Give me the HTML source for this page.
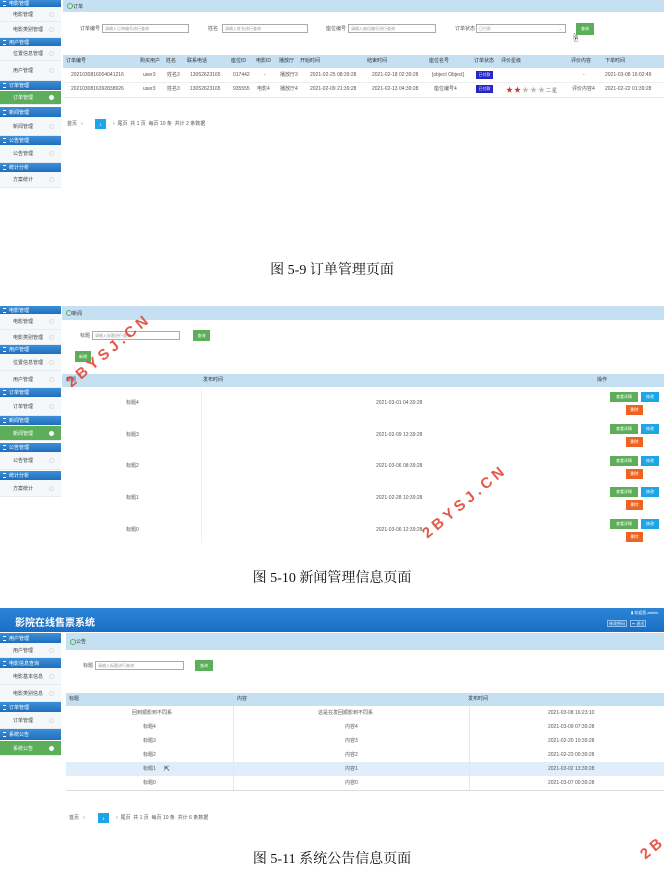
<!DOCTYPE html>
<html><head><meta charset="utf-8"><style>
*{margin:0;padding:0;box-sizing:border-box}
body{width:664px;height:876px;background:#fff;position:relative;overflow:hidden;font-family:"Liberation Sans","Noto Sans CJK SC",sans-serif;color:#555}
.a{position:absolute;white-space:nowrap}
.t{font-size:5px;line-height:1}
.sh{position:absolute;left:0;width:61px;background:linear-gradient(#3d8fd6,#1f6fbf);color:#fff;font-size:5px;padding-left:9px;display:flex;align-items:center}
.sh:before{content:"";position:absolute;left:3px;width:3px;height:3px;border-top:1px solid #fff;border-bottom:1px solid #fff}
.si{position:absolute;left:0;width:61px;background:#f4f8fb;font-size:5px;color:#444;padding-left:13px;display:flex;align-items:center;border-bottom:1px solid #e4ecf2}
.si:after{content:"";position:absolute;right:7px;width:3px;height:3px;border:1px solid #ddd;border-radius:50%}
.act{background:#5cae5a;color:#fff}
.act:after{border-color:#fff;background:#fff}
.hb{position:absolute;background:#c6e0f3;font-size:5px;color:#333;display:flex;align-items:center;padding-left:10px}
.hb:before{content:"";position:absolute;left:4px;width:4px;height:4px;border:1px solid #5cae5a;border-radius:50%}
.inp{position:absolute;height:9px;border:1px solid #aaa;background:#fff;font-size:4px;color:#999;padding-left:2px;line-height:7px}
.btn{position:absolute;color:#fff;font-size:4px;display:flex;align-items:center;justify-content:center}
.g{background:#5cae5a}.b{background:#1ea5e8}.o{background:#f0621f}
.th{position:absolute;background:#c6e0f3;font-size:5px;color:#333}
.cap{position:absolute;width:664px;text-align:center;font-family:"Liberation Serif","Noto Serif CJK SC",serif;font-size:14px;color:#111}
.wm{position:absolute;color:#e23a2a;font-weight:bold;font-size:15px;letter-spacing:4px;transform:rotate(-40deg);transform-origin:left bottom;opacity:.85}
</style></head><body>

<!-- ========== Screenshot 1 ========== -->
<div class="sh" style="top:0;height:7px">电影管理</div>
<div class="si" style="top:7px;height:15px">电影管理</div>
<div class="si" style="top:22px;height:16px">电影类别管理</div>
<div class="sh" style="top:38px;height:8px">用户管理</div>
<div class="si" style="top:46px;height:15px">位置信息管理</div>
<div class="si" style="top:61px;height:20px">用户管理</div>
<div class="sh" style="top:81px;height:9px">订单管理</div>
<div class="si act" style="top:91px;height:14px">订单管理</div>
<div class="sh" style="top:107px;height:10px">新闻管理</div>
<div class="si" style="top:117px;height:19px">新闻管理</div>
<div class="sh" style="top:136px;height:9px">公告管理</div>
<div class="si" style="top:145px;height:18px">公告管理</div>
<div class="sh" style="top:163px;height:9px">统计分析</div>
<div class="si" style="top:172px;height:16px">方案统计</div>

<div class="hb" style="left:63px;top:0;width:601px;height:12px">订单</div>
<div class="a t" style="left:80px;top:27px">订单编号</div><div class="inp" style="left:102px;top:24px;width:87px">请输入订单编号进行查询</div>
<div class="a t" style="left:208px;top:27px">姓名</div><div class="inp" style="left:222px;top:24px;width:86px">请输入姓名进行查询</div>
<div class="a t" style="left:326px;top:27px">座位编号</div><div class="inp" style="left:348px;top:24px;width:88px">请输入座位编号进行查询</div>
<div class="a t" style="left:455px;top:27px">订单状态</div><div class="inp" style="left:476px;top:24px;width:90px">已付款<span style="position:absolute;right:3px">⌄</span></div>
<div class="btn g" style="left:576px;top:23px;width:18px;height:12px">查询</div>
<div class="a" style="left:571px;top:31px;font-size:9px;color:#333">☝</div>

<div class="th" style="left:63px;top:55px;width:601px;height:13px"></div>
<div class="a t" style="top:59px;left:66px;color:#333">订单编号</div>
<div class="a t" style="top:59px;left:140px;color:#333">购买用户</div>
<div class="a t" style="top:59px;left:166px;color:#333">姓名</div>
<div class="a t" style="top:59px;left:187px;color:#333">联系电话</div>
<div class="a t" style="top:59px;left:231px;color:#333">座位ID</div>
<div class="a t" style="top:59px;left:256px;color:#333">电影ID</div>
<div class="a t" style="top:59px;left:279px;color:#333">播放厅</div>
<div class="a t" style="top:59px;left:300px;color:#333">开始时间</div>
<div class="a t" style="top:59px;left:367px;color:#333">结束时间</div>
<div class="a t" style="top:59px;left:429px;color:#333">座位名号</div>
<div class="a t" style="top:59px;left:474px;color:#333">订单状态</div>
<div class="a t" style="top:59px;left:501px;color:#333">评价星级</div>
<div class="a t" style="top:59px;left:571px;color:#333">评价内容</div>
<div class="a t" style="top:59px;left:605px;color:#333">下单时间</div>
<div class="a" style="left:63px;top:82px;width:601px;border-top:1px solid #eee"></div>
<div class="a" style="left:63px;top:97px;width:601px;border-top:1px solid #e6e6e6"></div>
<div class="a t" style="top:73px;left:71px">2021030816004041216</div>
<div class="a t" style="top:73px;left:143px">user3</div>
<div class="a t" style="top:73px;left:167px">姓名3</div>
<div class="a t" style="top:73px;left:190px">13052623165</div>
<div class="a t" style="top:73px;left:233px">017442</div>
<div class="a t" style="top:73px;left:264px">-</div>
<div class="a t" style="top:73px;left:280px">播放厅3</div>
<div class="a t" style="top:73px;left:310px">2021-02-25 08:39:28</div>
<div class="a t" style="top:73px;left:372px">2021-02-18 02:39:28</div>
<div class="a t" style="top:73px;left:432px">[object Object]</div>
<div class="btn" style="left:476px;top:71px;width:17px;height:8px;background:#2424c8">已付款</div>
<div class="a t" style="top:73px;left:583px">-</div>
<div class="a t" style="top:73px;left:605px">2021-03-08 16:02:49</div>
<div class="a t" style="top:87px;left:71px">2021030816392838926</div>
<div class="a t" style="top:87px;left:143px">user3</div>
<div class="a t" style="top:87px;left:167px">姓名3</div>
<div class="a t" style="top:87px;left:190px">13052623165</div>
<div class="a t" style="top:87px;left:233px">935555</div>
<div class="a t" style="top:87px;left:257px">电影4</div>
<div class="a t" style="top:87px;left:280px">播放厅4</div>
<div class="a t" style="top:87px;left:310px">2021-02-09 21:39:28</div>
<div class="a t" style="top:87px;left:372px">2021-02-13 04:39:28</div>
<div class="a t" style="top:87px;left:434px">座位编号4</div>
<div class="btn" style="left:476px;top:85px;width:17px;height:8px;background:#2424c8">已付款</div>
<div class="a" style="top:85px;left:506px;font-size:7px;color:#c0392b;letter-spacing:1px">★★<span style="color:#bbb">★★★</span><span style="font-size:5px;color:#555">二星</span></div>
<div class="a t" style="top:87px;left:572px">评价内容4</div>
<div class="a t" style="top:87px;left:605px">2021-02-22 01:39:28</div>
<div class="a t" style="top:122px;left:67px">首页 &nbsp;&nbsp;‹</div>
<div class="btn b" style="left:95px;top:119px;width:11px;height:10px">1</div>
<div class="a t" style="top:122px;left:113px">› &nbsp;尾页 &nbsp;共 1 页 &nbsp;每页 10 条 &nbsp;共计 2 条数据</div>
<div class="cap" style="top:259px">图 5-9 订单管理页面</div>

<!-- ========== Screenshot 2 ========== -->
<div class="sh" style="top:306px;height:8px">电影管理</div>
<div class="si" style="top:314px;height:16px">电影管理</div>
<div class="si" style="top:330px;height:15px">电影类别管理</div>
<div class="sh" style="top:345px;height:9px">用户管理</div>
<div class="si" style="top:354px;height:17px">位置信息管理</div>
<div class="si" style="top:371px;height:17px">用户管理</div>
<div class="sh" style="top:388px;height:9px">订单管理</div>
<div class="si" style="top:397px;height:19px">订单管理</div>
<div class="sh" style="top:416px;height:9px">新闻管理</div>
<div class="si act" style="top:426px;height:15px">新闻管理</div>
<div class="sh" style="top:443px;height:9px">公告管理</div>
<div class="si" style="top:452px;height:18px">公告管理</div>
<div class="sh" style="top:471px;height:9px">统计分析</div>
<div class="si" style="top:480px;height:17px">方案统计</div>

<div class="hb" style="left:62px;top:306px;width:602px;height:14px">新闻</div>
<div class="a t" style="left:80px;top:334px">标题</div><div class="inp" style="left:92px;top:331px;width:88px">请输入标题进行查询</div>
<div class="btn g" style="left:193px;top:330px;width:17px;height:11px">查询</div>
<div class="btn g" style="left:75px;top:351px;width:16px;height:11px">新增</div>
<div class="th" style="left:62px;top:374px;width:602px;height:13px"></div>
<div class="a t" style="top:378px;left:66px;color:#333">标题</div>
<div class="a t" style="top:378px;left:203px;color:#333">发布时间</div>
<div class="a t" style="top:378px;left:597px;color:#333">操作</div>
<div class="a" style="left:201px;top:388px;height:155px;border-left:1px solid #f0f0f0"></div>
<div class="a t" style="top:401px;left:126px">标题4</div><div class="a t" style="top:401px;left:376px">2021-03-01 04:39:28</div>
<div class="a t" style="top:433px;left:126px">标题3</div><div class="a t" style="top:433px;left:376px">2021-02-09 12:39:28</div>
<div class="a t" style="top:464px;left:126px">标题2</div><div class="a t" style="top:464px;left:376px">2021-03-06 08:39:28</div>
<div class="a t" style="top:496px;left:126px">标题1</div><div class="a t" style="top:496px;left:376px">2021-02-28 10:39:28</div>
<div class="a t" style="top:528px;left:126px">标题0</div><div class="a t" style="top:528px;left:376px">2021-03-06 12:39:28</div>
<div class="btn g" style="left:610px;top:392px;width:28px;height:10px">查看详情</div><div class="btn b" style="left:641px;top:392px;width:18px;height:10px">修改</div><div class="btn o" style="left:626px;top:405px;width:17px;height:10px">删除</div>
<div class="btn g" style="left:610px;top:424px;width:28px;height:10px">查看详情</div><div class="btn b" style="left:641px;top:424px;width:18px;height:10px">修改</div><div class="btn o" style="left:626px;top:437px;width:17px;height:10px">删除</div>
<div class="btn g" style="left:610px;top:456px;width:28px;height:10px">查看详情</div><div class="btn b" style="left:641px;top:456px;width:18px;height:10px">修改</div><div class="btn o" style="left:626px;top:469px;width:17px;height:10px">删除</div>
<div class="btn g" style="left:610px;top:487px;width:28px;height:10px">查看详情</div><div class="btn b" style="left:641px;top:487px;width:18px;height:10px">修改</div><div class="btn o" style="left:626px;top:500px;width:17px;height:10px">删除</div>
<div class="btn g" style="left:610px;top:519px;width:28px;height:10px">查看详情</div><div class="btn b" style="left:641px;top:519px;width:18px;height:10px">修改</div><div class="btn o" style="left:626px;top:532px;width:17px;height:10px">删除</div>
<div class="wm" style="left:74px;top:374px">2BYSJ.CN</div>
<div class="wm" style="left:430px;top:525px">2BYSJ.CN</div>
<div class="cap" style="top:567px">图 5-10 新闻管理信息页面</div>

<!-- ========== Screenshot 3 ========== -->
<div class="a" style="left:0;top:608px;width:664px;height:24px;background:linear-gradient(#2b84d6,#1a6ec4)"></div>
<div class="a" style="left:15px;top:614px;color:#fff;font-size:10px;font-weight:bold">影院在线售票系统</div>
<div class="a" style="left:631px;top:610px;color:#fff;font-size:4px">▮ 欢迎您,admin</div>
<div class="a" style="left:607px;top:620px;width:20px;height:7px;border:1px solid #8cc0ea;color:#fff;font-size:4px;text-align:center">修改密码</div>
<div class="a" style="left:630px;top:620px;width:16px;height:7px;border:1px solid #8cc0ea;color:#fff;font-size:4px;text-align:center">↦ 退出</div>
<div class="sh" style="top:633px;height:10px">用户管理</div>
<div class="si" style="top:643px;height:15px">用户管理</div>
<div class="sh" style="top:658px;height:10px">电影信息查询</div>
<div class="si" style="top:668px;height:17px">电影基本信息</div>
<div class="si" style="top:685px;height:17px">电影类别信息</div>
<div class="sh" style="top:702px;height:10px">订单管理</div>
<div class="si" style="top:712px;height:17px">订单管理</div>
<div class="sh" style="top:729px;height:11px">系统公告</div>
<div class="si act" style="top:741px;height:15px">系统公告</div>

<div class="hb" style="left:66px;top:633px;width:598px;height:17px">公告</div>
<div class="a t" style="left:83px;top:664px">标题</div><div class="inp" style="left:95px;top:661px;width:89px">请输入标题进行查询</div>
<div class="btn g" style="left:195px;top:660px;width:18px;height:11px">查询</div>
<div class="th" style="left:66px;top:693px;width:598px;height:13px"></div>
<div class="a t" style="top:697px;left:69px;color:#333">标题</div>
<div class="a t" style="top:697px;left:237px;color:#333">内容</div>
<div class="a t" style="top:697px;left:468px;color:#333">发布时间</div>
<div class="a" style="left:66px;top:762px;width:598px;height:14px;background:#dfeefa"></div>
<div class="a" style="left:66px;top:790px;width:598px;border-top:1px solid #ddd"></div>
<div class="a" style="left:233px;top:706px;height:84px;border-left:1px solid #e6e6e6"></div>
<div class="a" style="left:469px;top:706px;height:84px;border-left:1px solid #e6e6e6"></div>
<div class="a t" style="top:711px;left:132px">回到顺影到不同系</div><div class="a t" style="top:711px;left:318px">这是在发回顺影到不同系</div><div class="a t" style="top:711px;left:548px">2021-03-08 16:23:10</div>
<div class="a t" style="top:725px;left:143px">标题4</div><div class="a t" style="top:725px;left:345px">内容4</div><div class="a t" style="top:725px;left:548px">2021-03-09 07:39:28</div>
<div class="a t" style="top:739px;left:143px">标题3</div><div class="a t" style="top:739px;left:345px">内容3</div><div class="a t" style="top:739px;left:548px">2021-02-20 10:39:28</div>
<div class="a t" style="top:753px;left:143px">标题2</div><div class="a t" style="top:753px;left:345px">内容2</div><div class="a t" style="top:753px;left:548px">2021-02-23 00:39:28</div>
<div class="a t" style="top:767px;left:143px">标题1</div><div class="a t" style="top:767px;left:345px">内容1</div><div class="a t" style="top:767px;left:548px">2021-03-02 13:39:28</div>
<div class="a" style="left:164px;top:765px;font-size:7px;color:#333">⇱</div>
<div class="a t" style="top:781px;left:143px">标题0</div><div class="a t" style="top:781px;left:345px">内容0</div><div class="a t" style="top:781px;left:548px">2021-03-07 00:39:28</div>
<div class="a t" style="top:816px;left:69px">首页 &nbsp;&nbsp;‹</div>
<div class="btn b" style="left:98px;top:813px;width:11px;height:10px">1</div>
<div class="a t" style="top:816px;left:116px">› &nbsp;尾页 &nbsp;共 1 页 &nbsp;每页 10 条 &nbsp;共计 6 条数据</div>
<div class="wm" style="left:648px;top:846px">2B</div>
<div class="cap" style="top:848px">图 5-11 系统公告信息页面</div>
</body></html>
